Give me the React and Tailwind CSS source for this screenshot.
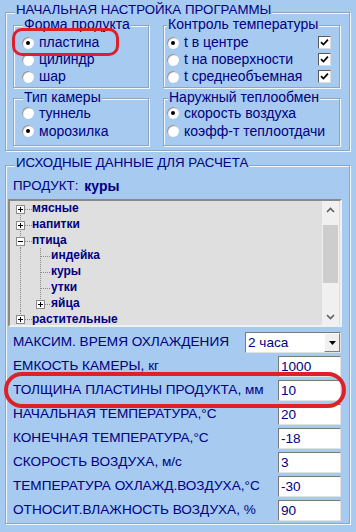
import React from 'react'

function Group({ title, className = '', titleClass = '-mt-[9px] pl-[9px]', children }) {
  return (
    <div className={`border border-[#8ea5bd] shadow-[1px_1px_0_#f4f8fc,inset_1px_1px_0_#f4f8fc] ${className}`}>
      <div className={`flex h-[14px] ${titleClass}`}>
        <span className="bg-[#a6caf0] px-[1px] leading-[14px]">{title}</span>
      </div>
      {children}
    </div>
  )
}

function Radio({ on }) {
  return (
    <span className="w-[12px] h-[12px] shrink-0 rounded-full bg-white shadow-[inset_1px_1px_1px_#8c8c8c] flex items-center justify-center">
      {on && <span className="w-[4px] h-[4px] rounded-full bg-black" />}
    </span>
  )
}

function Check() {
  return (
    <span className="w-[13px] h-[13px] shrink-0 bg-white border border-t-[#5a5a5a] border-l-[#5a5a5a] border-b-[#dcdcdc] border-r-[#dcdcdc] flex items-center justify-center">
      <svg width="9" height="9" viewBox="0 0 9 9">
        <path d="M1 4.2 L3.4 6.6 L8 1.6" stroke="#000" strokeWidth="1.7" fill="none" />
      </svg>
    </span>
  )
}

function RadioRow({ on, label, className = 'h-[17px]' }) {
  return (
    <div className={`flex items-center gap-[5px] ${className}`}>
      <Radio on={on} />
      <span>{label}</span>
    </div>
  )
}

// tree connector drawing, origin at page x = 10
function Gutter({ row }) {
  const dot = { stroke: '#8a8a8a', strokeDasharray: '1 1', shapeRendering: 'crispEdges' }
  const w = row.level === 0 ? 22 : 41
  const box = (cx, kind) => (
    <g shapeRendering="crispEdges">
      <rect x={cx - 4} y={4.5} width={8} height={8} fill="#fff" stroke="#8a8a8a" />
      <line x1={cx - 2} y1={8.5} x2={cx + 3} y2={8.5} stroke="#000" />
      {kind === 'plus' && <line x1={cx + 0.5} y1={6} x2={cx + 0.5} y2={11} stroke="#000" />}
    </g>
  )
  return (
    <svg width={w} height="16" className="shrink-0">
      {row.level === 0 ? (
        <>
          <line x1="10.5" y1={row.first ? 8 : 0} x2="10.5" y2={row.last ? 8 : 16} style={dot} />
          <line x1="15" y1="8.5" x2="22" y2="8.5" style={dot} />
          {box(10, row.box)}
        </>
      ) : (
        <>
          <line x1="10.5" y1="0" x2="10.5" y2="16" style={dot} />
          <line x1="30.5" y1="0" x2="30.5" y2={row.lastChild ? 8 : 16} style={dot} />
          <line x1="31" y1="8.5" x2="41" y2="8.5" style={dot} />
          {row.box && box(30, row.box)}
        </>
      )}
    </svg>
  )
}

const tree = [
  { label: 'мясные', level: 0, box: 'plus', first: true },
  { label: 'напитки', level: 0, box: 'plus' },
  { label: 'птица', level: 0, box: 'minus' },
  { label: 'индейка', level: 1 },
  { label: 'куры', level: 1 },
  { label: 'утки', level: 1 },
  { label: 'яйца', level: 1, box: 'plus', lastChild: true },
  { label: 'растительные', level: 0, box: 'plus', last: true },
]

const fields = [
  ['ЕМКОСТЬ КАМЕРЫ, кг', '1000'],
  ['ТОЛЩИНА ПЛАСТИНЫ ПРОДУКТА, мм', '10'],
  ['НАЧАЛЬНАЯ ТЕМПЕРАТУРА,°С', '20'],
  ['КОНЕЧНАЯ ТЕМПЕРАТУРА,°С', '-18'],
  ['СКОРОСТЬ ВОЗДУХА, м/с', '3'],
  ['ТЕМПЕРАТУРА ОХЛАЖД.ВОЗДУХА,°С', '-30'],
  ['ОТНОСИТ.ВЛАЖНОСТЬ ВОЗДУХА, %', '90'],
]

function Chevron({ up }) {
  return (
    <svg width="9" height="6" viewBox="0 0 9 6">
      <path d={up ? 'M1 5 L4.5 1.5 L8 5' : 'M1 1 L4.5 4.5 L8 1'} stroke="#606060" strokeWidth="1.6" fill="none" />
    </svg>
  )
}

export default function App() {
  return (
    <div className="relative w-[356px] h-[532px] overflow-hidden bg-[#a6caf0] pt-[12px] font-['Liberation_Sans',Arial,sans-serif] text-[13.3px] text-[#000080]">
      <Group title="НАЧАЛЬНАЯ НАСТРОЙКА ПРОГРАММЫ" titleClass="-mt-[10px] pl-[9px]" className="ml-[5px] w-[345px] h-[139px]">
        <div className="mt-[8px] pl-[7px] flex gap-[14px] text-[14px]">
          <div className="flex flex-col gap-[10px]">
            <Group title="Форма продукта" className="w-[136px] h-[63px]">
              <div className="mt-[3px] pl-[8px]">
                <RadioRow on label="пластина" />
                <RadioRow label="цилиндр" />
                <RadioRow label="шар" />
              </div>
            </Group>
            <Group title="Тип камеры" className="w-[136px] h-[48px]">
              <div className="pl-[8px]">
                <RadioRow label="туннель" className="h-[18px]" />
                <RadioRow on label="морозилка" className="h-[18px]" />
              </div>
            </Group>
          </div>
          <div className="flex flex-col gap-[10px]">
            <Group title="Контроль температуры" titleClass="-mt-[9px] pl-[3px]" className="w-[177px] h-[63px]">
              <div className="mt-[3px] pl-[3px] pr-[8px]">
                {[
                  [true, 't в центре'],
                  [false, 't на поверхности'],
                  [false, 't среднеобъемная'],
                ].map(([on, label]) => (
                  <div key={label} className="flex items-center h-[17px]">
                    <RadioRow on={on} label={label} className="flex-1" />
                    <Check />
                  </div>
                ))}
              </div>
            </Group>
            <Group title="Наружный теплообмен" titleClass="-mt-[9px] pl-[4px]" className="w-[177px] h-[48px]">
              <div className="pl-[3px]">
                <RadioRow on label="скорость воздуха" className="h-[18px]" />
                <RadioRow label="коэфф-т теплоотдачи" className="h-[18px]" />
              </div>
            </Group>
          </div>
        </div>
      </Group>

      <Group title="ИСХОДНЫЕ ДАННЫЕ ДЛЯ РАСЧЕТА" titleClass="-mt-[10px] pl-[9px]" className="mt-[14px] ml-[5px] w-[345px] h-[359px]">
        <div className="mt-[8px] pl-[7px] h-[16px] flex items-center gap-[6px]">
          <span>ПРОДУКТ:</span>
          <span className="font-bold text-[14px]">куры</span>
        </div>
        <div className="mt-[5px] ml-[2px] w-[334px] h-[128px] flex border-2 border-t-[#8a8a8a] border-l-[#8a8a8a] border-b-[#f0f0f0] border-r-[#f0f0f0] bg-[#dfdfdf] overflow-hidden">
          <div className="flex-1 text-[12px] font-bold leading-[15.8px]">
            {tree.map((row) => (
              <div key={row.label} className="flex items-center h-[15.8px]">
                <Gutter row={row} />
                <span>{row.label}</span>
              </div>
            ))}
          </div>
          <div className="w-[17px] mr-[1px] bg-[#f0f0f0] flex flex-col items-center">
            <div className="h-[17px] flex items-center justify-center">
              <Chevron up />
            </div>
            <div className="flex-1 w-full px-[1px] pt-[7px]">
              <div className="h-[58px] bg-[#cdcdcd]" />
            </div>
            <div className="h-[17px] flex items-center justify-center">
              <Chevron />
            </div>
          </div>
        </div>

        <div className="mt-[5px] pl-[7px] pr-[8px] flex flex-col gap-[3px] text-[13.6px]">
          <div className="h-[21px] flex items-center justify-between">
            <span>МАКСИМ. ВРЕМЯ ОХЛАЖДЕНИЯ</span>
            <div className="w-[96px] h-[21px] bg-white flex border border-t-[#7a7a7a] border-l-[#7a7a7a] border-b-[#e4e4e4] border-r-[#e4e4e4]">
              <span className="flex-1 pl-[2px] leading-[19px]">2 часа</span>
              <span className="w-[16px] bg-[#f0f0f0] border border-t-white border-l-white border-b-[#808080] border-r-[#808080] flex items-center justify-center">
                <svg width="7" height="4" viewBox="0 0 7 4">
                  <path d="M0 0 H7 L3.5 4 Z" fill="#000" />
                </svg>
              </span>
            </div>
          </div>
          {fields.map(([label, value]) => (
            <div key={label} className="h-[21px] flex items-center justify-between">
              <span>{label}</span>
              <div className="w-[63px] h-[21px] bg-white pl-[2px] leading-[19px] border border-t-[#7a7a7a] border-l-[#7a7a7a] border-b-[#e4e4e4] border-r-[#e4e4e4]">
                {value}
              </div>
            </div>
          ))}
        </div>
      </Group>

      <div className="absolute left-[12px] top-[28px] w-[107px] h-[28px] rounded-[10px] border-[3px] border-[#de2128]" />
      <div className="absolute left-[4px] top-[372px] w-[342px] h-[36px] rounded-[18px] border-[4px] border-[#de2128]" />
    </div>
  )
}
